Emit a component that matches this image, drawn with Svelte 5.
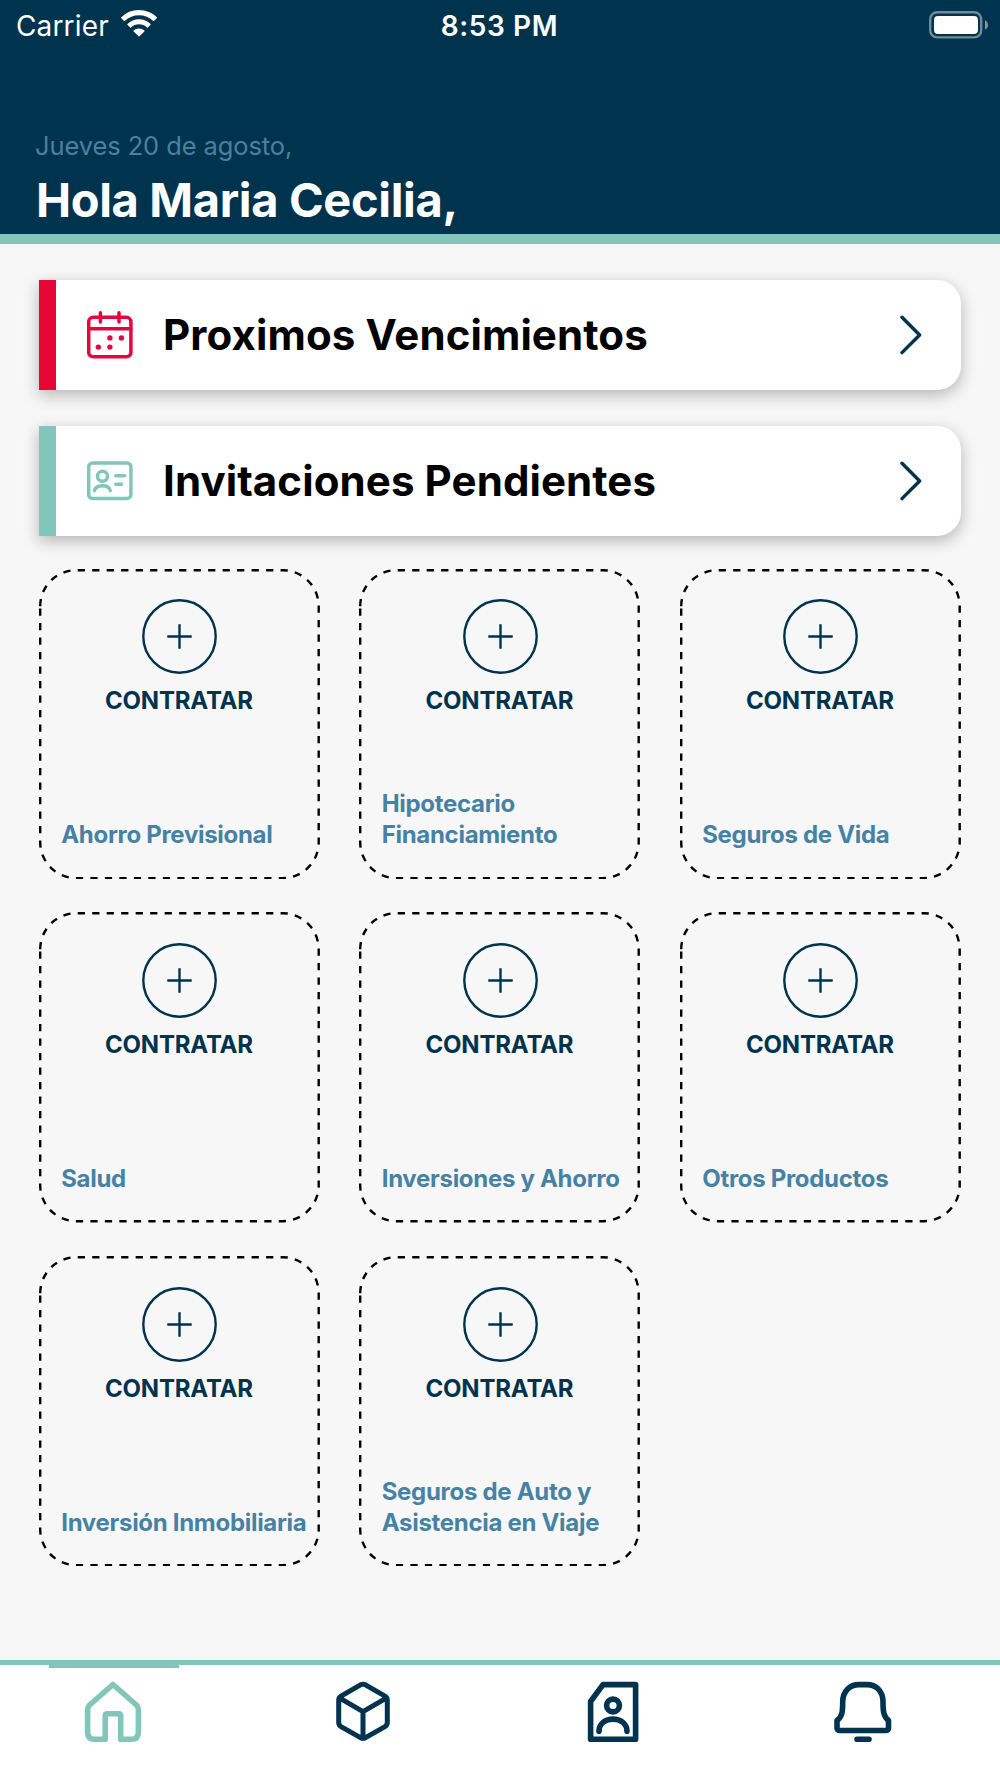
<script lang="ts">
	type Notice = { title: string; kind: 'due' | 'invite' };

	const notices: Notice[] = [
		{ title: 'Proximos Vencimientos', kind: 'due' },
		{ title: 'Invitaciones Pendientes', kind: 'invite' }
	];

	const products: string[][] = [
		['Ahorro Previsional'],
		['Hipotecario', 'Financiamiento'],
		['Seguros de Vida'],
		['Salud'],
		['Inversiones y Ahorro'],
		['Otros Productos'],
		['Inversión Inmobiliaria'],
		['Seguros de Auto y', 'Asistencia en Viaje']
	];
</script>

<div class="screen">
	<header>
		<div class="status">
			<div class="carrier">
				<span>Carrier</span>
				<svg class="wifi" viewBox="0 0 36 27" width="36" height="27">
					<path d="M18 0C25 0 31.400 2.800 36 7.400Q36.200 7.800 35.900 8.100L33 10.900Q32.600 11.200 32.200 10.900A20.500 20.500 0 0 0 3.800 10.900Q3.400 11.200 3 10.900L.1 8.100Q-.2 7.800 0 7.400A25.700 25.700 0 0 1 18 0Z" />
					<path d="M18 9.300C22.500 9.300 26.600 11.100 29.600 14Q30 14.400 29.600 14.800L26.800 17.500Q26.400 17.900 26 17.500A11.700 11.700 0 0 0 10 17.500Q9.600 17.900 9.200 17.500L6.400 14.800Q6 14.400 6.400 14A17 17 0 0 1 18 9.300Z" />
					<path d="M18 18.600Q21.300 18.600 23.400 20.600Q23.800 21 23.400 21.400L18.400 26.300Q18 26.700 17.600 26.300L12.600 21.400Q12.200 21 12.600 20.600Q14.700 18.600 18 18.600Z" />
				</svg>
			</div>
			<span class="time">8:53 PM</span>
			<svg class="battery" viewBox="0 0 60 28" width="60" height="28">
				<rect x="1.200" y="1.200" width="51" height="25.200" rx="7" class="shell" />
				<rect x="5" y="5" width="44" height="18" rx="4" fill="#fff" />
				<path d="M56 9.300Q59 10.800 59 14T56 18.700Z" class="cap" />
			</svg>
		</div>
		<p class="date">Jueves 20 de agosto,</p>
		<h1>Hola Maria Cecilia,</h1>
	</header>

	<main>
		<section class="notices">
			{#each notices as notice}
				<button class="notice {notice.kind}">
					<svg class="icon" viewBox="0 0 46 48" width="46" height="48">
						{#if notice.kind === 'due'}
							<rect x="1.700" y="6.300" width="42.200" height="39.500" rx="4.500" />
							<path d="M1.600 17.700H43.800M13.400 1.800V11M32 1.800V11" />
							<g class="dots">
								<circle cx="22.900" cy="26.900" r="2.700" />
								<circle cx="34.400" cy="26.900" r="2.700" />
								<circle cx="11.300" cy="36.100" r="2.700" />
								<circle cx="22.900" cy="36.100" r="2.700" />
							</g>
						{:else}
							<rect x="1.700" y="6" width="42.200" height="35.500" rx="3.800" />
							<circle cx="15.500" cy="19.200" r="5" />
							<path d="M7.500 33.600C9 27 22 27 23.400 33.600M28.800 18.700H37.700M28.800 27.200H34.500" />
						{/if}
					</svg>
					<span>{notice.title}</span>
					<svg class="chevron" viewBox="0 0 22 40" width="22" height="40">
						<path d="M2 2.200L19.600 20L2 37.600" />
					</svg>
				</button>
			{/each}
		</section>

		<section class="grid">
			{#each products as lines}
				<button class="tile">
					<svg class="outline" viewBox="0 0 281 310.400" width="281" height="310.400">
						<path d="M1.200 37.200A36 36 0 0 1 37.200 1.200H243.700A36 36 0 0 1 279.700 37.200V273.200A36 36 0 0 1 243.700 309.200H37.200A36 36 0 0 1 1.200 273.200Z" />
					</svg>
					<svg class="plus" viewBox="0 0 75 75" width="75" height="75">
						<circle cx="37.500" cy="37.500" r="36.200" />
						<path d="M25.300 37.500H49.700M37.500 25.300V49.700" />
					</svg>
					<span class="action">CONTRATAR</span>
					<span class="name">
						{#each lines as line}
							<span>{line}</span>
						{/each}
					</span>
				</button>
			{/each}
		</section>
	</main>

	<nav>
		<a class="active" href="#inicio" aria-label="Inicio">
			<svg viewBox="0 0 60 62" width="60" height="62">
				<path d="M30 3.500L53.400 24Q55.400 26 55.400 29V51Q55.400 58.300 48.500 58.300H37.700V34.800Q37.700 32.700 35.600 32.700H24.300Q22.200 32.700 22.200 34.800V58.300H11.500Q4.600 58.300 4.600 51V29Q4.600 26 6.600 24Z" />
			</svg>
		</a>
		<a href="#productos" aria-label="Productos">
			<svg viewBox="0 0 60 62" width="60" height="62" class="thin">
				<path d="M27.500 3.800Q30 2.500 32.500 3.800L52 15.200Q54.300 16.600 54.300 19.200V41.600Q54.300 44.200 52 45.600L32.500 56.700Q30 58 27.500 56.700L8 45.600Q5.700 44.200 5.700 41.600V19.200Q5.700 16.600 8 15.200ZM6.800 17.200L30 30.700L53.200 17.200M30 30.700V57" />
			</svg>
		</a>
		<a href="#perfil" aria-label="Perfil">
			<svg viewBox="0 0 60 62" width="60" height="62">
				<path d="M20 3.600H52.600V58.300H7.600V20.500Z" />
				<circle cx="30" cy="24.500" r="6.400" />
				<path d="M16 50.300C16 34 44 34 44 50.300" />
			</svg>
		</a>
		<a href="#avisos" aria-label="Avisos">
			<svg viewBox="0 0 60 62" width="60" height="62">
				<path d="M26 3.600H34C43 3.600 50 10 50 21C50 30 50.500 35.500 55.500 39.500V46.500Q55.500 49.500 52.500 49.500H7Q4 49.500 4 46.500V39.500C9.500 35.500 9.700 30 9.700 21C9.700 10 17 3.600 26 3.600ZM24 58.200H36" />
			</svg>
		</a>
	</nav>
</div>

<style>
	:global(body) {
		margin: 0;
	}

	.screen {
		width: 1000px;
		height: 1778px;
		display: flex;
		flex-direction: column;
		background: #f7f7f7;
		color: #00334e;
		font-family: Inter, 'Liberation Sans', sans-serif;
		overflow: hidden;
	}

	button {
		border: 0;
		padding: 0;
		font: inherit;
		color: inherit;
		text-align: left;
	}

	svg {
		display: block;
		flex-shrink: 0;
		fill: none;
		stroke-linecap: round;
		stroke-linejoin: round;
	}

	header {
		box-sizing: border-box;
		height: 244px;
		background: #00334e;
		border-bottom: 10px solid #81c6b9;
		color: #fff;
	}

	.status {
		height: 52px;
		padding: 0 11px 0 16px;
		display: grid;
		grid-template-columns: 1fr auto 1fr;
		align-items: center;
		font-size: 28px;
	}

	.carrier {
		display: flex;
		align-items: center;
		gap: 12px;
		letter-spacing: 0.150px;
	}

	.wifi {
		fill: #fff;
		margin-top: -5px;
	}

	.time {
		font-weight: 600;
		letter-spacing: 0.6px;
		margin-right: 6px;
	}

	.battery {
		justify-self: end;
		margin-top: -3px;
	}

	.shell {
		stroke: #718b9b;
		stroke-width: 2.4;
	}

	.cap {
		fill: #8097a5;
	}

	.date {
		margin: 78px 0 0 35px;
		font-size: 25.500px;
		line-height: 32px;
		font-weight: 400;
		letter-spacing: -0.1px;
		color: #4a819f;
		white-space: nowrap;
	}

	h1 {
		margin: 9px 0 0 36px;
		font-size: 47px;
		line-height: 58px;
		font-weight: 700;
		letter-spacing: -0.35px;
		white-space: nowrap;
	}

	main {
		flex: 1;
		padding: 36px 39px 0;
	}

	.notices {
		display: flex;
		flex-direction: column;
		gap: 36px;
	}

	.notice {
		box-sizing: border-box;
		height: 110px;
		padding: 0 39px 0 31px;
		display: flex;
		align-items: center;
		background: #fff;
		border-left: 17px solid #e60537;
		border-radius: 0 24px 24px 0;
		box-shadow: 0 5px 16px rgba(0, 0, 0, 0.27);
		color: #000;
		font-size: 42px;
		font-weight: 700;
		letter-spacing: 0.1px;
		white-space: nowrap;
	}

	.notice.invite {
		border-color: #81c6b9;
	}

	.notice span {
		flex: 1;
		margin: -2px 0 0 30px;
	}

	.icon {
		stroke: #e6053f;
		stroke-width: 3.5;
	}

	.invite .icon {
		stroke: #81c6b9;
	}

	.dots {
		fill: #e6053f;
		stroke: none;
	}

	.chevron {
		stroke: #00334e;
		stroke-width: 3.4;
	}

	.grid {
		display: grid;
		grid-template-columns: repeat(3, 281px);
		grid-auto-rows: 310.400px;
		gap: 33.400px 39.500px;
		margin: 32.500px 0 0 -0.300px;
	}

	.tile {
		box-sizing: border-box;
		position: relative;
		padding: 30.500px 0 28px 22.500px;
		display: flex;
		flex-direction: column;
		background: none;
		font-size: 24px;
		font-weight: 700;
		white-space: nowrap;
	}

	.outline {
		position: absolute;
		inset: 0;
		stroke: #000;
		stroke-width: 2.4;
		stroke-linecap: butt;
		stroke-dasharray: 7.245;
	}

	.plus {
		align-self: center;
		margin-right: 21px;
		stroke: #00334e;
		stroke-width: 2.400;
		stroke-linecap: butt;
	}

	.action {
		align-self: center;
		margin: 11px 23px 0 0;
		line-height: 31px;
		letter-spacing: -0.2px;
	}

	.name {
		margin-top: auto;
		display: flex;
		flex-direction: column;
		line-height: 31.400px;
		letter-spacing: -0.3px;
		color: #4682a3;
	}

	nav {
		box-sizing: border-box;
		height: 118.500px;
		display: grid;
		grid-template-columns: repeat(4, 1fr);
		background: #fff;
		border-top: 5px solid #81c6b9;
	}

	nav a {
		position: relative;
		padding: 16px 0 0 83px;
		color: #00334e;
	}

	nav svg {
		stroke: currentColor;
		stroke-width: 5.600;
	}

	nav .thin {
		stroke-width: 5;
	}

	nav .active {
		color: #81c6b9;
	}

	.active::before {
		content: '';
		position: absolute;
		top: 0;
		left: 49px;
		width: 130px;
		height: 3.500px;
		background: #81c6b9;
	}
</style>
